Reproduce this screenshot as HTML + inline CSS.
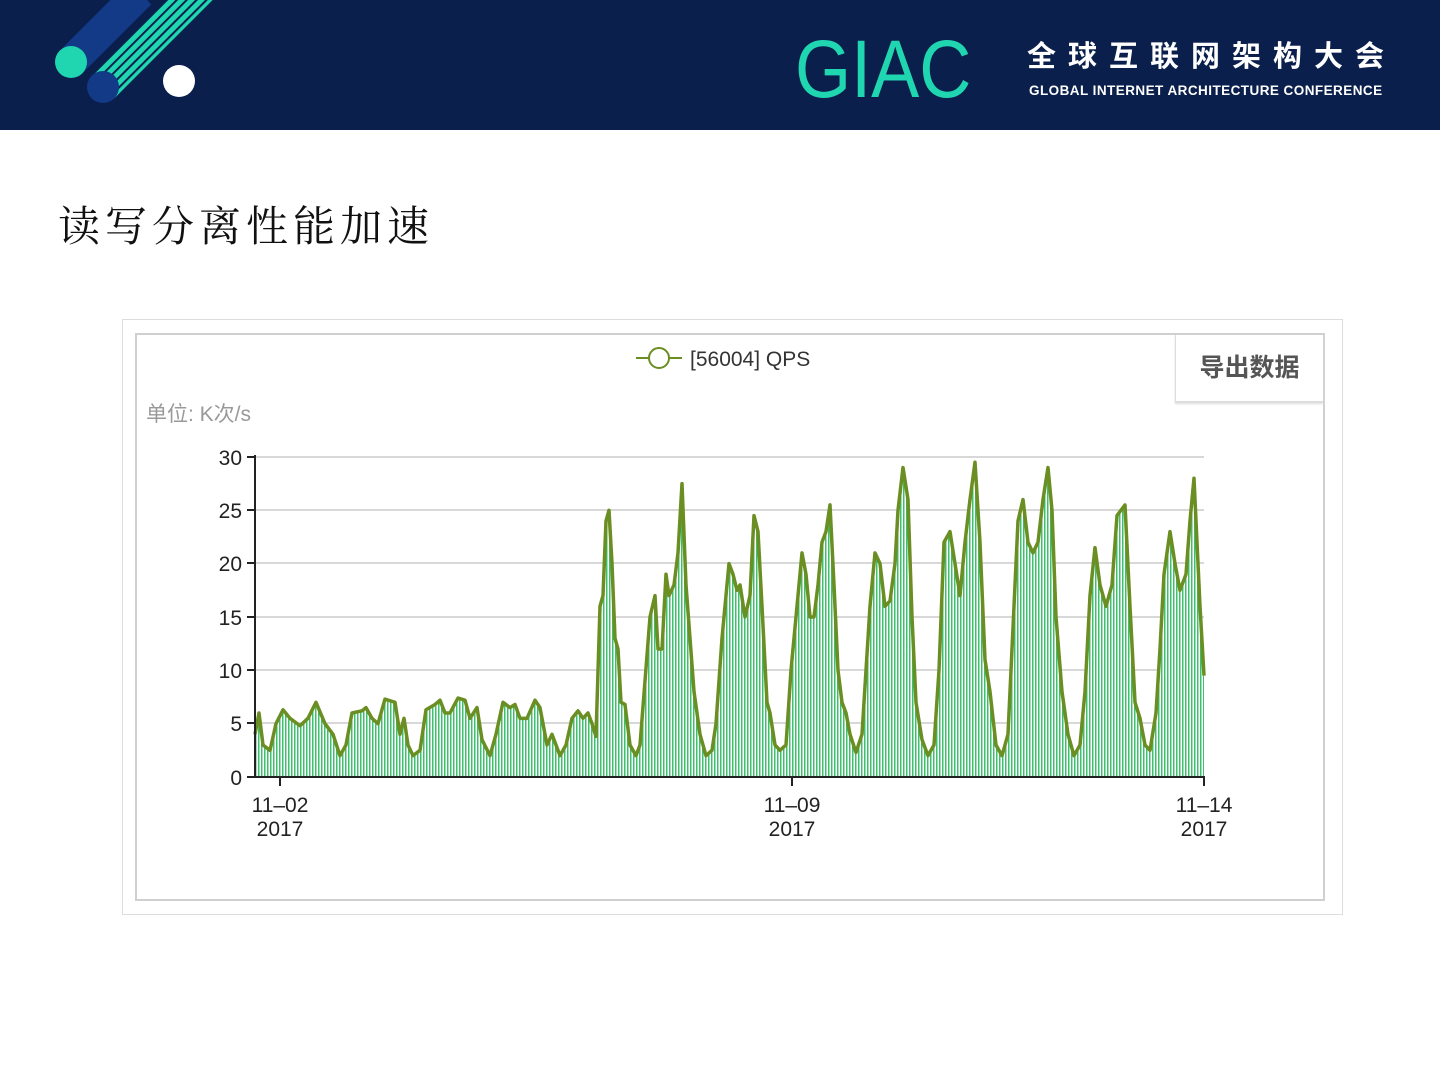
<!DOCTYPE html>
<html><head><meta charset="utf-8"><style>
body{margin:0;width:1440px;height:1080px;background:#fff;position:relative;overflow:hidden;font-family:"Liberation Sans","Noto Sans CJK SC",sans-serif}
.hdr{position:absolute;left:0;top:0;width:1440px;height:130px;background:#0b1f4c}
.abs{position:absolute}
</style></head><body>
<div class="hdr">
<svg width="260" height="130" class="abs" style="left:0;top:0">
 <defs><pattern id="st" width="7" height="7" patternUnits="userSpaceOnUse" patternTransform="rotate(45)"><rect width="7" height="7" fill="#0b1f4c"/><rect width="5" height="7" fill="#1fd6b0"/></pattern></defs>
 <line x1="71" y1="62" x2="140" y2="-7" stroke="#123a86" stroke-width="32" />
 <circle cx="71" cy="62" r="16" fill="#1fd6b0"/>
 <line x1="103" y1="87" x2="205" y2="-15" stroke="url(#st)" stroke-width="32"/>
 <circle cx="103" cy="87" r="16" fill="#123a86"/>
 <circle cx="179" cy="81" r="16" fill="#fff"/>
</svg>
<div class="abs" style="left:795px;top:20px;font-size:82px;color:#1fd6b0;line-height:100px;transform:scaleX(0.88);transform-origin:0 0;white-space:nowrap">GIAC</div>
<div class="abs" style="left:1027px;top:38px;font-size:29px;font-weight:bold;color:#fff;letter-spacing:12px;line-height:38px;white-space:nowrap">全球互联网架构大会</div>
<div class="abs" style="left:1029px;top:83px;font-size:13.5px;font-weight:bold;color:#fff;letter-spacing:0.45px;white-space:nowrap">GLOBAL INTERNET ARCHITECTURE CONFERENCE</div>
</div>
<div class="abs" style="left:58px;top:196px;font-family:'Noto Serif CJK SC',serif;font-size:42px;letter-spacing:5px;color:#111;white-space:nowrap;line-height:56px">读写分离性能加速</div>
<div class="abs" style="left:122px;top:319px;width:1219px;height:594px;border:1px solid #ddd"></div>
<div class="abs" style="left:135px;top:333px;width:1186px;height:564px;border:2px solid #d0d0d0"></div>
<div class="abs" style="left:1175px;top:335px;width:147px;height:66px;border-left:1px solid #ddd;border-bottom:2px solid #ddd;box-shadow:0 1px 2px #ddd;font-size:25px;font-weight:bold;color:#555;text-align:center;line-height:66px">导出数据</div>
<div class="abs" style="left:146px;top:398px;font-size:21px;color:#999">单位: K次/s</div>
<svg width="1440" height="1080" class="abs" style="left:0;top:0">
 <defs><pattern id="vs" width="3" height="10" patternUnits="userSpaceOnUse"><rect width="3" height="10" fill="#fff"/><rect width="1.5" height="10" fill="#3dbf6e"/></pattern></defs>
 <g stroke="#ccc" stroke-width="1.5">
  <line x1="255" y1="457" x2="1204" y2="457"/><line x1="255" y1="510" x2="1204" y2="510"/><line x1="255" y1="563" x2="1204" y2="563"/><line x1="255" y1="617" x2="1204" y2="617"/><line x1="255" y1="670" x2="1204" y2="670"/><line x1="255" y1="723" x2="1204" y2="723"/>
 </g>
 <g transform="translate(0,777) scale(1,-10.67)">
  <path id="d" fill="url(#vs)" d="M255,0 L255,4 L259,6 L263,3 L270,2.5 L276,5 L283,6.3 L290,5.5 L300,4.8 L308,5.5 L316,7 L325,5 L333,4 L340,2 L346,3 L352,6 L362,6.2 L366,6.5 L372,5.5 L378,5 L385,7.3 L395,7 L400,4 L404,5.5 L408,3 L413,2 L420,2.5 L426,6.3 L435,6.8 L440,7.2 L445,6 L450,6 L458,7.4 L465,7.2 L470,5.5 L477,6.5 L482,3.5 L490,2 L496,4 L503,7 L510,6.5 L515,6.8 L520,5.5 L527,5.5 L535,7.2 L540,6.5 L547,3 L552,4 L560,2 L566,3 L572,5.5 L578,6.2 L583,5.5 L588,6 L592,5 L596,3.8 L600,16 L603,17 L606,24 L609,25 L612,20 L615,13 L618,12 L621,7 L625,6.8 L630,3 L636,2 L640,3 L645,9 L650,15 L655,17 L658,12 L662,12 L666,19 L669,17 L674,18 L678,21 L682,27.5 L686,18 L690,13 L694,8 L700,4 L706,2 L712,2.5 L716,5 L722,13 L729,20 L733,19 L737,17.5 L740,18 L745,15 L750,17 L754,24.5 L758,23 L762,16 L767,7 L770,6 L775,3 L780,2.5 L786,3 L791,10 L797,16 L802,21 L806,19 L810,15 L814,15 L818,18 L822,22 L826,23 L830,25.5 L834,18 L838,10 L842,7 L846,6 L850,4 L856,2.3 L862,4 L866,10 L870,16 L875,21 L880,20 L885,16 L890,16.5 L895,20 L898,25 L903,29 L908,26 L912,15 L916,7 L922,3.5 L928,2 L934,3 L939,10 L944,22 L950,23 L955,20 L960,17 L965,22 L970,26 L975,29.5 L980,22 L985,11 L990,8 L996,3 L1002,2 L1008,4 L1013,14 L1018,24 L1023,26 L1028,22 L1033,21 L1038,22 L1043,26 L1048,29 L1052,25 L1056,15 L1062,8 L1068,4 L1074,2 L1080,3 L1085,8 L1090,17 L1095,21.5 L1100,18 L1106,16 L1112,18 L1117,24.5 L1125,25.5 L1130,16 L1135,7 L1140,5.5 L1145,3 L1150,2.5 L1156,6 L1160,12 L1164,19 L1170,23 L1175,20 L1180,17.5 L1186,19 L1190,24 L1194,28 L1200,16 L1204,9.5 L1204,0 Z"/>
 </g>
 <g transform="translate(0,777) scale(1,-10.67)">
  <path fill="none" stroke="#6b8e23" stroke-width="3.5" vector-effect="non-scaling-stroke" stroke-linejoin="round" d="M255,4 L259,6 L263,3 L270,2.5 L276,5 L283,6.3 L290,5.5 L300,4.8 L308,5.5 L316,7 L325,5 L333,4 L340,2 L346,3 L352,6 L362,6.2 L366,6.5 L372,5.5 L378,5 L385,7.3 L395,7 L400,4 L404,5.5 L408,3 L413,2 L420,2.5 L426,6.3 L435,6.8 L440,7.2 L445,6 L450,6 L458,7.4 L465,7.2 L470,5.5 L477,6.5 L482,3.5 L490,2 L496,4 L503,7 L510,6.5 L515,6.8 L520,5.5 L527,5.5 L535,7.2 L540,6.5 L547,3 L552,4 L560,2 L566,3 L572,5.5 L578,6.2 L583,5.5 L588,6 L592,5 L596,3.8 L600,16 L603,17 L606,24 L609,25 L612,20 L615,13 L618,12 L621,7 L625,6.8 L630,3 L636,2 L640,3 L645,9 L650,15 L655,17 L658,12 L662,12 L666,19 L669,17 L674,18 L678,21 L682,27.5 L686,18 L690,13 L694,8 L700,4 L706,2 L712,2.5 L716,5 L722,13 L729,20 L733,19 L737,17.5 L740,18 L745,15 L750,17 L754,24.5 L758,23 L762,16 L767,7 L770,6 L775,3 L780,2.5 L786,3 L791,10 L797,16 L802,21 L806,19 L810,15 L814,15 L818,18 L822,22 L826,23 L830,25.5 L834,18 L838,10 L842,7 L846,6 L850,4 L856,2.3 L862,4 L866,10 L870,16 L875,21 L880,20 L885,16 L890,16.5 L895,20 L898,25 L903,29 L908,26 L912,15 L916,7 L922,3.5 L928,2 L934,3 L939,10 L944,22 L950,23 L955,20 L960,17 L965,22 L970,26 L975,29.5 L980,22 L985,11 L990,8 L996,3 L1002,2 L1008,4 L1013,14 L1018,24 L1023,26 L1028,22 L1033,21 L1038,22 L1043,26 L1048,29 L1052,25 L1056,15 L1062,8 L1068,4 L1074,2 L1080,3 L1085,8 L1090,17 L1095,21.5 L1100,18 L1106,16 L1112,18 L1117,24.5 L1125,25.5 L1130,16 L1135,7 L1140,5.5 L1145,3 L1150,2.5 L1156,6 L1160,12 L1164,19 L1170,23 L1175,20 L1180,17.5 L1186,19 L1190,24 L1194,28 L1200,16 L1204,9.5"/>
 </g>
 <g stroke="#222" stroke-width="2">
  <line x1="255" y1="455" x2="255" y2="778"/><line x1="254" y1="777" x2="1205" y2="777"/>
  <line x1="247" y1="457" x2="255" y2="457"/><line x1="247" y1="510" x2="255" y2="510"/><line x1="247" y1="563" x2="255" y2="563"/><line x1="247" y1="617" x2="255" y2="617"/><line x1="247" y1="670" x2="255" y2="670"/><line x1="247" y1="723" x2="255" y2="723"/><line x1="247" y1="777" x2="255" y2="777"/>
  <line x1="280" y1="777" x2="280" y2="786"/><line x1="792" y1="777" x2="792" y2="786"/><line x1="1204" y1="777" x2="1204" y2="786"/>
 </g>
 <g font-family="Liberation Sans,sans-serif" font-size="21" fill="#222" text-anchor="end">
  <text x="242" y="465">30</text><text x="242" y="518">25</text><text x="242" y="571">20</text><text x="242" y="625">15</text><text x="242" y="678">10</text><text x="242" y="731">5</text><text x="242" y="785">0</text>
 </g>
 <g font-family="Liberation Sans,sans-serif" font-size="21" fill="#222" text-anchor="middle">
  <text x="280" y="812">11–02</text><text x="280" y="836">2017</text>
  <text x="792" y="812">11–09</text><text x="792" y="836">2017</text>
  <text x="1204" y="812">11–14</text><text x="1204" y="836">2017</text>
 </g>
 <line x1="636" y1="358" x2="682" y2="358" stroke="#6b8e23" stroke-width="2"/>
 <circle cx="659" cy="358" r="10" fill="#fff" stroke="#6b8e23" stroke-width="2"/>
 <text x="690" y="366" font-family="Liberation Sans,sans-serif" font-size="21" fill="#333">[56004] QPS</text>
</svg>
</body></html>
